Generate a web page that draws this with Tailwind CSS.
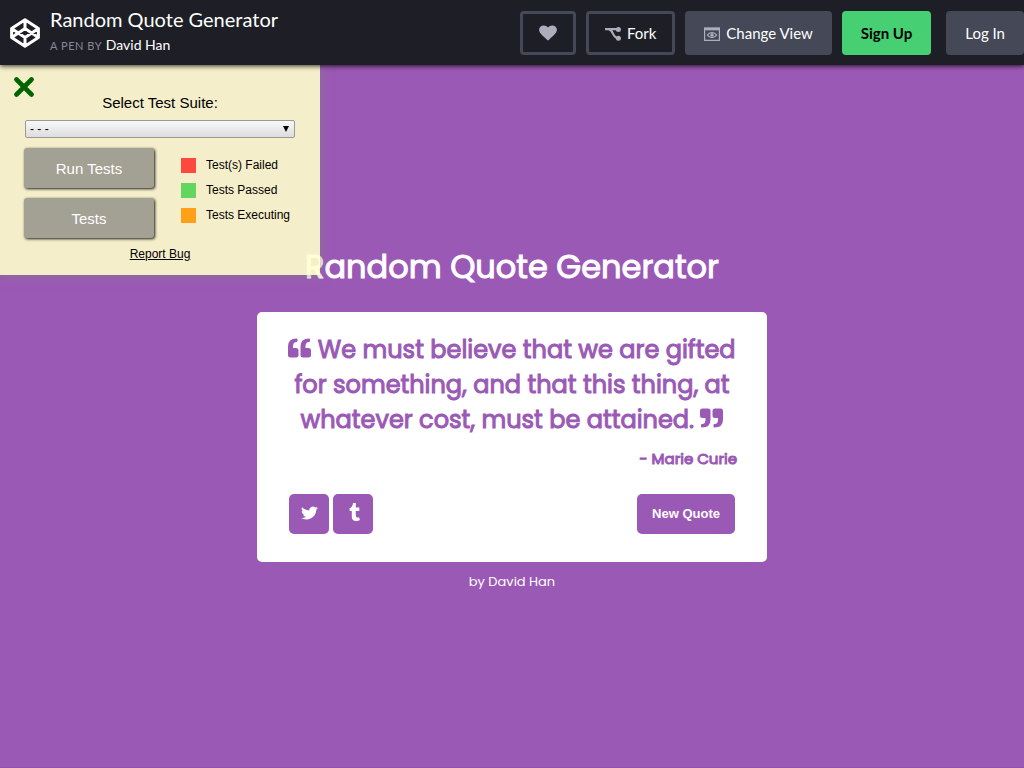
<!DOCTYPE html>
<html lang="en">
<head>
<meta charset="utf-8">
<meta name="viewport" content="width=device-width, initial-scale=1">
<title>Random Quote Generator</title>
<script src="https://cdn.jsdelivr.net/npm/@tailwindcss/browser@4"></script>
</head>
<body class="flex min-h-screen flex-col bg-[#9b59b6] font-['Liberation_Sans',sans-serif]">

<header class="relative z-20 flex h-[65px] items-center justify-between bg-[#1e1f26] pl-2.5 font-['Lato',sans-serif] text-white shadow-[0_1px_5px_rgba(0,0,0,0.8)]">
  <div class="flex items-center gap-2.5">
    <a href="#" aria-label="CodePen">
      <svg class="size-[30px]" viewBox="0 0 30 30" fill="none" stroke="#fff" stroke-width="3" stroke-linejoin="round">
        <path d="M15 1.7 28.4 10.5V19.5L15 28.3 1.6 19.5V10.5ZM15 1.7V10.5M15 19.5V28.3M1.6 10.5 15 19.5 28.4 10.5M1.6 19.5 15 10.5 28.4 19.5"/>
      </svg>
    </a>
    <div>
      <h1 class="text-xl leading-6">Random Quote Generator</h1>
      <p class="mt-0.5 text-sm leading-6"><span class="text-[11px] tracking-wider text-[#868999]">A PEN BY</span> <a href="#">David Han</a></p>
    </div>
  </div>
  <nav class="flex items-center gap-2.5 text-[15px]">
    <button type="button" aria-label="Love" class="flex h-11 w-14 items-center justify-center rounded border-3 border-[#444857]">
      <svg class="h-4 w-[18px]" viewBox="0 0 18 16" fill="#acaebd"><path d="M9 15.6 7.7 14.4C3 10.2.1 7.7.1 4.8.1 2.2 2.2.4 4.7.4 6.400.4 8 1.300 9 2.600 10 1.300 11.600.4 13.300.4 15.800.4 17.900 2.200 17.900 4.800 17.900 7.700 15 10.200 10.300 14.400Z"/></svg>
    </button>
    <button type="button" class="flex h-11 items-center gap-1.5 rounded border-3 border-[#444857] px-4 pt-0.5">
      <svg class="h-4 w-4" viewBox="0 0 16 16" fill="none" stroke="#acaebd" stroke-width="2.200"><path d="M0 3.200H13M3.500 3.200C8.500 3.200 7.200 12 13 12"/><circle cx="13.400" cy="3.400" r="2.500" fill="#acaebd" stroke="none"/><circle cx="13.400" cy="12.200" r="2.500" fill="#acaebd" stroke="none"/></svg>
      Fork
    </button>
    <button type="button" class="flex h-11 items-center gap-1.5 rounded bg-[#444857] px-[19px] pt-0.5">
      <svg class="h-4 w-4" viewBox="0 0 16 16" fill="none" stroke="#acaebd"><path d="M.6 2H15.400V14.400H.6Z" stroke-width="1.200"/><path d="M0 3H16" stroke-width="2.600"/><path d="M3.400 9C5.400 5.700 10.600 5.700 12.600 9 10.600 12.300 5.400 12.300 3.400 9Z" stroke-width="1.300"/><circle cx="8" cy="9" r="1.700" fill="#acaebd" stroke="none"/></svg>
      Change View
    </button>
    <a href="#" class="flex h-11 items-center rounded bg-[#47cf73] px-[19px] pt-0.5 font-bold text-black">Sign Up</a>
    <a href="#" class="ml-[5px] flex h-11 items-center rounded bg-[#444857] px-[19px] pt-0.5">Log In</a>
  </nav>
</header>

<div class="relative flex flex-1 flex-col items-center justify-center shadow-[inset_0_-1px_0_rgba(0,0,0,0.08)]">
  <aside class="absolute top-0 left-0 z-10 w-80 bg-[#ffffcc]/90 px-6 pt-7 pb-[13px] shadow-[1px_1px_10px_rgba(128,128,128,0.6)]">
    <button type="button" aria-label="Close" class="absolute top-3 left-3.5">
      <svg class="size-5" viewBox="0 0 20 20" stroke="#006400" stroke-width="4.600" stroke-linecap="round"><path d="M2.500 2.500 17.500 17.500M17.500 2.500 2.500 17.500"/></svg>
    </button>
    <label for="suite" class="block text-center text-[15px] leading-5 text-black">Select Test Suite:</label>
    <div class="relative mx-px mt-[7px]">
      <select id="suite" class="block h-[18px] w-full appearance-none rounded-xs border border-[#999] bg-linear-to-b from-[#f8f8f8] to-[#dddddd] pl-1 text-xs leading-4 text-black">
        <option>- - -</option>
      </select>
      <svg class="pointer-events-none absolute top-[6px] right-1.5 h-[6px] w-[6px]" viewBox="0 0 6 6"><path d="M0 0H6L3 6Z"/></svg>
    </div>
    <div class="mt-2.5 flex gap-[27px]">
      <div class="flex flex-col gap-2.5 text-[15px] text-white">
        <button type="button" class="h-10 w-[130px] rounded-[3px] bg-[#a3a094] pt-0.5 shadow-[1px_1px_3px_rgba(0,0,0,0.9)]">Run Tests</button>
        <button type="button" class="h-10 w-[130px] rounded-[3px] bg-[#a3a094] pt-0.5 shadow-[1px_1px_3px_rgba(0,0,0,0.9)]">Tests</button>
      </div>
      <ul class="flex flex-col gap-2.5 pt-2.5 text-xs leading-[15px] text-black">
        <li class="flex gap-2.5"><span class="size-[15px] bg-[#ff483e]"></span>Test(s) Failed</li>
        <li class="flex gap-2.5"><span class="size-[15px] bg-[#62d65f]"></span>Tests Passed</li>
        <li class="flex gap-2.5"><span class="size-[15px] bg-[#ffa116]"></span>Tests Executing</li>
      </ul>
    </div>
    <p class="mt-2 text-center text-xs leading-4"><a href="#" class="text-black underline">Report Bug</a></p>
  </aside>

  <main class="w-full max-w-[510px] text-center font-['Poppins','Inter',sans-serif]">
    <h2 class="mb-5 text-[32px] leading-[50px] font-normal whitespace-nowrap text-white [-webkit-text-stroke:1px]">Random Quote Generator</h2>
    <section class="rounded-[5px] bg-white px-[30px] pt-5 pb-7 text-[#9b59b6]">
      <blockquote class="text-2xl leading-[35px] font-normal [-webkit-text-stroke:1px]">
        <svg class="inline h-5 w-[23px] align-baseline" viewBox="0 0 23 20" fill="currentColor" stroke="none"><path id="mark" d="M8 10H5V8.500Q5 4 8.500 4Q9.500 4 9.500 3V1.500Q9.500.5 8.500.5Q0 .5 0 8.500V17Q0 19.500 2.500 19.500H8Q10.500 19.500 10.500 17V12.500Q10.500 10 8 10Z"/><use href="#mark" x="12.500"/></svg>
        We must believe that we are gifted for something, and that this thing, at whatever cost, must be attained.
        <svg class="inline h-5 w-[23px] rotate-180 align-baseline" viewBox="0 0 23 20" fill="currentColor" stroke="none"><use href="#mark"/><use href="#mark" x="12.500"/></svg>
      </blockquote>
      <p class="mt-2.5 text-right text-[15px] leading-6 font-normal [-webkit-text-stroke:1px]">- Marie Curie</p>
      <div class="mt-[23px] flex items-center gap-1 px-0.5 text-white">
        <a href="#" aria-label="Share on Twitter" class="flex size-10 items-center justify-center rounded-[5px] bg-[#9b59b6] pb-0.5">
          <svg class="h-4 w-[17px]" viewBox="0 0 24 24" preserveAspectRatio="none" fill="currentColor"><path d="M24 4.600a10 10 0 0 1-2.800.8 5 5 0 0 0 2.200-2.700 10 10 0 0 1-3.100 1.200 4.900 4.900 0 0 0-8.400 4.500A14 14 0 0 1 1.700 3.200a4.900 4.900 0 0 0 1.500 6.500 4.900 4.900 0 0 1-2.200-.6v.1a4.900 4.900 0 0 0 4 4.800 4.900 4.900 0 0 1-2.300.1 4.900 4.900 0 0 0 4.600 3.400A9.900 9.900 0 0 1 0 19.500 14 14 0 0 0 7.500 21.700c9.100 0 14.300-7.700 14-14.600A10 10 0 0 0 24 4.600Z"/></svg>
        </a>
        <a href="#" aria-label="Share on Tumblr" class="flex size-10 items-center justify-center rounded-[5px] bg-[#9b59b6] pb-1 pl-0.5">
          <svg class="h-[18px] w-[11px]" viewBox="0 0 11 18" fill="currentColor"><path d="M4 0H6.800V4.600H10.300V8H6.800V12.800Q6.800 14.600 8.300 14.600Q9.400 14.600 10 14.200L10.900 16.900Q9.700 18 7.200 18Q2.800 18 2.800 13.800V8H.6V5.200Q3.600 4.200 4 0Z"/></svg>
        </a>
        <button type="button" class="ml-auto h-10 rounded-[5px] bg-[#9b59b6] px-[15px] font-['Liberation_Sans',sans-serif] text-[13px] font-bold">New Quote</button>
      </div>
    </section>
    <p class="mt-2.5 text-[13px] leading-5 text-white">by <a href="#">David Han</a></p>
  </main>
</div>
</body>
</html>
